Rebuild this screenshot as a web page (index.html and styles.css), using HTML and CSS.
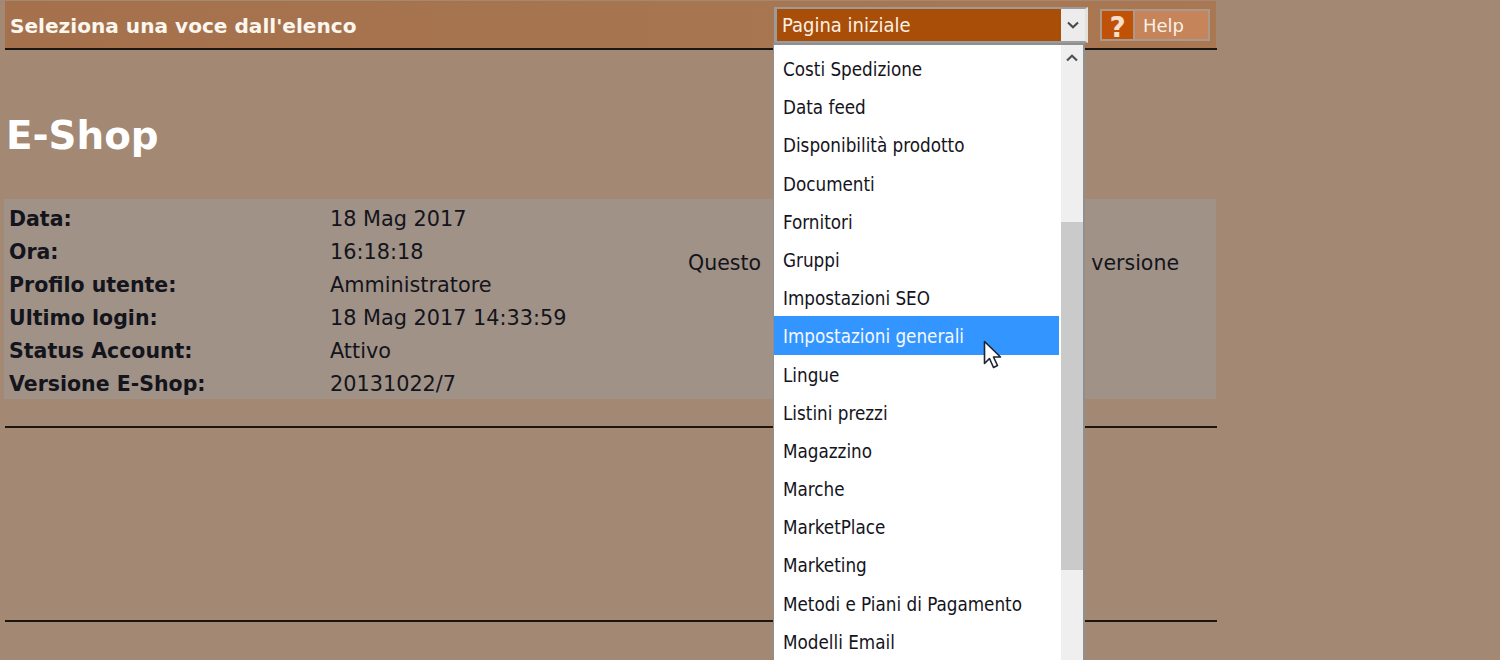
FILE: index.html
```html
<!DOCTYPE html>
<html lang="it">
<head>
<meta charset="utf-8">
<title>E-Shop</title>
<link rel="stylesheet" href="styles.css">
</head>
<body>
<div class="page">
  <header class="topbar">
    <div class="topbar-title">Seleziona una voce dall'elenco</div>
    <div class="select">
      <div class="select-value">Pagina iniziale</div>
      <div class="select-arrow">
        <svg width="12" height="8" viewBox="0 0 12 8"><path d="M1 1.5 L6 6.2 L11 1.5" fill="none" stroke="#4a4a4a" stroke-width="2.2"/></svg>
      </div>
    </div>
    <div class="help">
      <span class="help-icon">?</span>
      <span class="help-label">Help</span>
    </div>
  </header>
  <hr class="rule">
  <h1 class="heading">E-Shop</h1>
  <section class="panel">
    <dl class="info">
      <dt>Data:</dt><dd>18 Mag 2017</dd>
      <dt>Ora:</dt><dd>16:18:18</dd>
      <dt>Profilo utente:</dt><dd>Amministratore</dd>
      <dt>Ultimo login:</dt><dd>18 Mag 2017 14:33:59</dd>
      <dt>Status Account:</dt><dd>Attivo</dd>
      <dt>Versione E-Shop:</dt><dd>20131022/7</dd>
    </dl>
    <div class="notice"><span>Questo</span><span>versione</span></div>
  </section>
  <hr class="rule rule-mid">
  <hr class="rule rule-low">
</div>
<div class="menu">
  <ul class="menu-list">
    <li>Costi Spedizione</li>
    <li>Data feed</li>
    <li>Disponibilità prodotto</li>
    <li>Documenti</li>
    <li>Fornitori</li>
    <li>Gruppi</li>
    <li>Impostazioni SEO</li>
    <li class="active">Impostazioni generali</li>
    <li>Lingue</li>
    <li>Listini prezzi</li>
    <li>Magazzino</li>
    <li>Marche</li>
    <li>MarketPlace</li>
    <li>Marketing</li>
    <li>Metodi e Piani di Pagamento</li>
    <li>Modelli Email</li>
  </ul>
  <div class="scrollbar">
    <svg class="scroll-up" width="12" height="8" viewBox="0 0 12 8"><path d="M1 6.5 L6 1.8 L11 6.5" fill="none" stroke="#505050" stroke-width="2.2"/></svg>
    <div class="thumb"></div>
  </div>
</div>
<svg class="cursor" width="20" height="30" viewBox="0 0 20 30"><path d="M1.5 1.5 V23.5 L6.5 18.5 L10.5 27.5 L14.5 25.5 L10.5 17 H17.5 Z" fill="#fff" stroke="#1d2430" stroke-width="1.6" stroke-linejoin="round"/></svg>
</body>
</html>
```
FILE: styles.css
```css
* { box-sizing: border-box; }
html, body { margin: 0; height: 660px; overflow: hidden; }
body {
  background: #a38873;
  font-family: "DejaVu Sans", Verdana, sans-serif;
  color: #14141c;
  position: relative;
  padding-top: 1px;
}
.page { width: 1217px; padding-left: 4px; }
.topbar {
  height: 47px;
  margin: 0 1px 0 1px;
  padding: 0 6px 0 5px;
  background: linear-gradient(90deg, #a5714d, #a97853);
  display: flex;
  align-items: flex-start;
}
.topbar-title {
  flex: 1;
  font-size: 20.1px;
  font-weight: bold;
  color: #fbf6ee;
  line-height: 50px;
}
.select {
  width: 314px;
  height: 36px;
  margin-top: 6px;
  margin-right: 12px;
  display: flex;
  border: 3px solid #9b9b9b;
  border-top-width: 2px;
  border-bottom-width: 2px;
  border-right-color: #e6e0da;
}
.select-value {
  flex: 1;
  background: #a94e08;
  color: #fbf1e6;
  font: 20px/33px "DejaVu Sans Condensed", "Noto Sans", sans-serif;
  padding-left: 5px;
}
.select-arrow {
  width: 24px;
  background: #ececec;
  display: flex;
  align-items: center;
  justify-content: center;
}
.help {
  width: 110px;
  height: 32px;
  margin-top: 8px;
  display: flex;
  border: 2px solid #ab9a8c;
  background: #c5845a;
}
.help-icon {
  width: 33px;
  background: #bf5207;
  color: #f6dfcc;
  font: bold 28px/33px "DejaVu Sans", sans-serif;
  text-align: center;
  border-right: 2px solid #ab9a8c;
}
.help-label {
  color: #fbf1e6;
  font-size: 18px;
  line-height: 29px;
  padding-left: 8px;
}
.rule {
  margin: 0 0 0 1px;
  height: 2px;
  border: none;
  background: #1d1610;
}
.heading {
  margin: 62px 0 0 2px;
  height: 87px;
  font-size: 38.8px;
  line-height: 48px;
  color: #fff;
}
.panel {
  height: 200px;
  width: 1212px;
  background: #a09287;
  display: grid;
  grid-template-columns: 684px 1fr;
}
.info {
  margin: 0;
  padding: 4px 0 0 5px;
  display: grid;
  grid-template-columns: 321px 1fr;
  grid-auto-rows: 33px;
  font-size: 20.8px;
  line-height: 33px;
}
.info dt { font-weight: bold; font-size: 20.5px; }
.info dd { margin: 0; }
.notice {
  display: flex;
  justify-content: space-between;
  padding: 48px 37px 0 0;
  font-size: 20.5px;
  line-height: 33px;
}
.rule-mid { margin-top: 27px; }
.rule-low { margin-top: 192px; }
.menu {
  position: absolute;
  left: 773px;
  top: 43px;
  width: 312px;
  height: 617px;
  background: #fff;
  border-top: 2px solid #8f8f8f;
  border-left: 1px solid #8f8f8f;
  border-right: 2px solid #8f8f8f;
  display: flex;
  overflow: hidden;
}
.menu-list {
  width: 285px;
  margin: 0;
  padding: 4px 0 0;
  list-style: none;
  font: 18.7px/41px "DejaVu Sans Condensed", "Noto Sans", sans-serif;
  color: #14141c;
}
.menu-list li { padding-left: 9px; height: 38.2px; }
.menu-list .active { background: #3395ff; color: #f4f8ff; }
.scrollbar {
  width: 22px;
  margin-left: 2px;
  background: #efefef;
  position: relative;
  display: flex;
  justify-content: center;
  padding-top: 9px;
}
.scroll-up { display: block; }
.thumb {
  position: absolute;
  left: 0;
  right: 0;
  top: 177px;
  height: 348px;
  background: #cacaca;
}
.cursor { position: absolute; left: 983px; top: 340px; }
```
